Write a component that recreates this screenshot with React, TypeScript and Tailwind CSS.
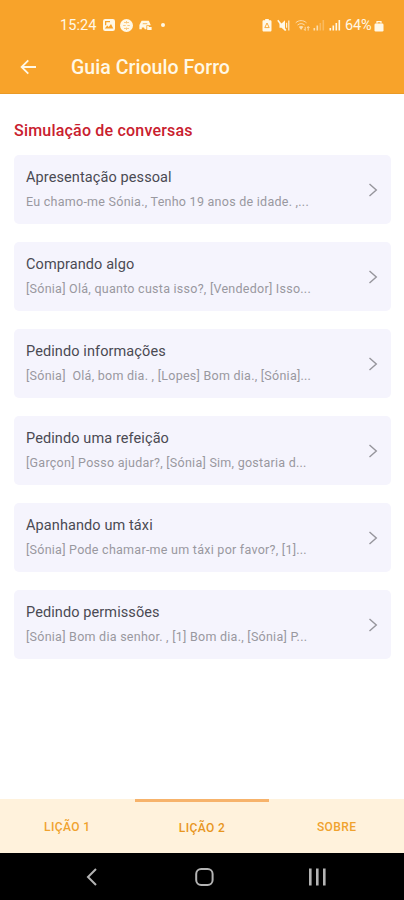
import React from 'react';

interface Conversation {
  title: string;
  preview: string;
}

const conversations: Conversation[] = [
  { title: 'Apresentação pessoal', preview: 'Eu chamo-me Sónia., Tenho 19 anos de idade. ,...' },
  { title: 'Comprando algo', preview: '[Sónia] Olá, quanto custa isso?, [Vendedor] Isso...' },
  { title: 'Pedindo informações', preview: '[Sónia]  Olá, bom dia. , [Lopes] Bom dia., [Sónia]...' },
  { title: 'Pedindo uma refeição', preview: '[Garçon] Posso ajudar?, [Sónia] Sim, gostaria d...' },
  { title: 'Apanhando um táxi', preview: '[Sónia] Pode chamar-me um táxi por favor?, [1]...' },
  { title: 'Pedindo permissões', preview: '[Sónia] Bom dia senhor. , [1] Bom dia., [Sónia] P...' },
];

const tabs = [
  { label: 'LIÇÃO 1', active: false },
  { label: 'LIÇÃO 2', active: true },
  { label: 'SOBRE', active: false },
];

const SignalIcon = ({ level }: { level: number }) => (
  <svg width="12" height="12" viewBox="0 0 12 12" fill="#fff8e6">
    <rect x="0.5" y="9" width="1.6" height="2.5" opacity={level > 0 ? 1 : 0.4} />
    <rect x="3.5" y="6.5" width="1.6" height="5" opacity={level > 1 ? 1 : 0.4} />
    <rect x="6.5" y="4" width="1.6" height="7.5" opacity={level > 2 ? 1 : 0.4} />
    <rect x="9.5" y="1" width="1.6" height="10.5" opacity={level > 3 ? 1 : 0.4} />
  </svg>
);

const StatusBar = () => (
  <div className="flex h-[50px] items-center pl-[60px] pr-[20px] text-[#fff8e6]">
    <span className="w-[43px] pt-0.5 text-[14.5px] tracking-[0.1px]">15:24</span>

    {/* Gallery */}
    <svg className="mr-[5px]" width="12" height="12" viewBox="0 0 12 12">
      <rect width="12" height="12" rx="2.2" fill="#fff8e6" />
      <path d="M2 2h5v1.3H3.3v3H2Z" fill="#f8a32a" />
      <path d="M1.8 9.6 4.2 6.6 5.7 8 8 5 10.3 9.6Z" fill="#f8a32a" />
    </svg>
    {/* Globe */}
    <svg className="mr-[6px]" width="13" height="13" viewBox="0 0 13 13">
      <circle cx="6.5" cy="6.5" r="6.5" fill="#fff8e6" />
      <path d="M4 3.5h5M3.2 6.5h2.5M7.4 6.5h2.4M4 9.5h5M6.5 2v2.5M6.5 8.5V11" stroke="#f8a32a" strokeWidth="0.9" opacity="0.6" />
    </svg>
    {/* Car */}
    <svg width="13" height="12" viewBox="0 0 13 12">
      <path d="M2.6 1.8h7.2l2 4.4H7.4v4H5.8L5 8.6H2.8v1.6H.4V6Z" fill="#fff8e6" />
      <path d="M4 4h4l.6 1.2H3.4Z" fill="#f8a32a" opacity="0.6" />
      <path d="M8.2 7h1.6v1h2.8v3H8.2Z" fill="#fff8e6" />
    </svg>
    <span className="ml-[9px] h-1 w-1 rounded-full bg-[#fff8e6]" />

    <div className="ml-auto flex items-center">
      {/* Battery saver */}
      <svg className="mr-[5px]" width="10" height="13" viewBox="0 0 10 13">
        <path d="M3.2 0h3.6v1.3h1.4c.8 0 1.3.5 1.3 1.3v8.6c0 .9-.5 1.4-1.3 1.4H1.8c-.8 0-1.3-.5-1.3-1.4V2.6c0-.8.5-1.3 1.3-1.3h1.4Z" fill="#fff8e6" />
        <path d="M5 4 7.2 8.6H2.8Z" fill="none" stroke="#f8a32a" strokeWidth="0.9" strokeLinejoin="round" />
      </svg>
      {/* Muted speaker */}
      <svg className="mr-[5px]" width="13" height="13" viewBox="0 0 13 13">
        <path d="M2.5 4.4h2L8 1.3v10.4L4.5 8.8h-2Z" fill="#fff8e6" />
        <path d="M.8 1.3 8.8 11.6" stroke="#fff8e6" strokeWidth="1.6" />
        <path d="M9.6 3.8v5M11.8 1.5v10" stroke="#fff8e6" strokeWidth="1.2" opacity="0.9" />
      </svg>
      {/* Wi-Fi */}
      <svg className="mr-[3px]" width="15" height="13" viewBox="0 0 15 13">
        <g opacity="0.7">
          <path d="M.7 3.8C3.8.9 8.4.9 11.5 3.8M2.5 6c2.1-1.8 5.1-1.8 7.2 0" fill="none" stroke="#fff8e6" strokeWidth="1" />
          <path d="M3.8 7.7C5.2 6.7 7 6.7 8.4 7.7L6.1 11Z" fill="#fff8e6" />
          <path d="M10.2 11.5V7.8M8.9 10.1l1.3 1.4M13.2 7.6v4M12 9l1.2-1.4L14.5 9" fill="none" stroke="#fff8e6" strokeWidth="1" />
        </g>
      </svg>
      <div className="mr-[4px] flex opacity-70">
        <SignalIcon level={2} />
      </div>
      <div className="mr-[4px] flex">
        <SignalIcon level={4} />
      </div>
      <span className="w-[29px] pt-0.5 text-[14.5px] tracking-[-0.1px]">64%</span>
      {/* Battery */}
      <svg width="10" height="13" viewBox="0 0 10 13">
        <path d="M3 4.5V2.7h4v1.8" fill="none" stroke="#fff8e6" strokeWidth="1.2" />
        <rect x="0.5" y="4.5" width="9" height="8" rx="1.2" fill="#fff8e6" />
      </svg>
    </div>
  </div>
);

const ConversationCard = ({ title, preview }: Conversation) => (
  <li className="flex h-[69px] items-center justify-between rounded-[5px] bg-[#f5f4fd] pl-3 pr-[13px]">
    <div className="flex flex-col pt-px">
      <span className="text-[14.5px] leading-[22px] tracking-[0.1px] text-[#4a4a53]">{title}</span>
      <span className="mt-0.5 whitespace-pre text-[12.5px] leading-[22px] tracking-[0.26px] text-[#99989f]">{preview}</span>
    </div>
    <svg width="10" height="14" viewBox="0 0 10 14" fill="none" stroke="#96959c" strokeWidth="1.4">
      <path d="M1.5 1 8.3 7 1.5 13" />
    </svg>
  </li>
);

const App: React.FC = () => {
  return (
    <div className="flex h-[900px] w-[404px] flex-col overflow-hidden bg-white font-[Roboto,sans-serif]">
      {/* Header */}
      <header className="h-[94px] shrink-0 border-b border-[#ea9a26] bg-[#f8a32a]">
        <StatusBar />
        <div className="flex h-[34px] items-center pl-[20px]">
          <svg width="17" height="16" viewBox="0 0 17 16" fill="none" stroke="#fff8e6" strokeWidth="1.8">
            <path d="M16 8H2M8.3 1.3 1.6 8l6.7 6.7" />
          </svg>
          <h1 className="ml-[34px] pt-px text-[19.5px] font-medium tracking-[0.05px] text-[#fff8e6]">Guia Crioulo Forro</h1>
        </div>
      </header>

      {/* Conversations */}
      <main className="flex-1 pl-[14px] pr-[13px] pt-[25px]">
        <h2 className="text-[16px] font-medium leading-6 tracking-[0.2px] text-[#c9202e]">Simulação de conversas</h2>
        <ul className="mt-3 flex flex-col gap-[18px]">
          {conversations.map((conversation) => (
            <ConversationCard key={conversation.title} {...conversation} />
          ))}
        </ul>
      </main>

      {/* Tabs */}
      <nav className="grid h-[54px] shrink-0 grid-cols-3 bg-[#fff2dc]">
        {tabs.map((tab) => (
          <button
            key={tab.label}
            className={
              tab.active
                ? 'border-t-[3px] border-[#f7b36b] text-[12px] font-medium tracking-[0.4px] text-[#e8961e]'
                : 'border-t border-transparent text-[12px] font-medium tracking-[0.4px] text-[#f0a22e]'
            }
          >
            {tab.label}
          </button>
        ))}
      </nav>

      {/* System navigation */}
      <footer className="flex h-[47px] shrink-0 items-center bg-black pl-[86px]">
        <svg width="11" height="18" viewBox="0 0 11 18" fill="none" stroke="#b4b4b4" strokeWidth="2">
          <path d="M10 1 2 9l8 8" />
        </svg>
        <svg className="ml-[98px]" width="19" height="18" viewBox="0 0 19 18" fill="none" stroke="#b4b4b4" strokeWidth="2">
          <rect x="1.2" y="1" width="16.4" height="16" rx="5" />
        </svg>
        <svg className="ml-[95px]" width="17" height="18" viewBox="0 0 17 18" fill="#b4b4b4">
          <rect x="0" y="0.5" width="2.6" height="17" />
          <rect x="7" y="0.5" width="2.6" height="17" />
          <rect x="14" y="0.5" width="2.6" height="17" />
        </svg>
      </footer>
    </div>
  );
};

export default App;
